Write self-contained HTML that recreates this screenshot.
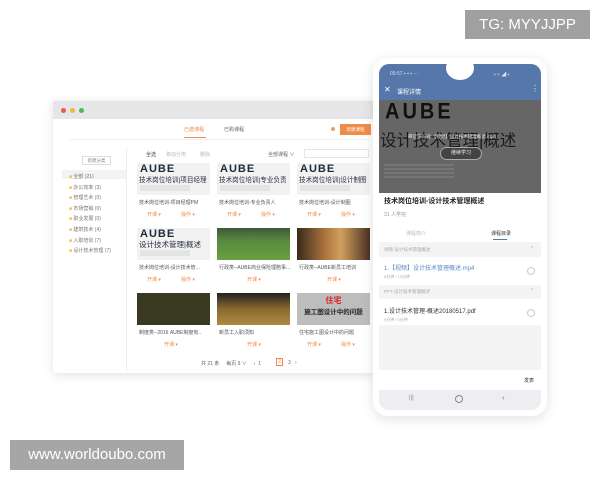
<!DOCTYPE html>
<html><head><meta charset="utf-8"><style>
*{margin:0;padding:0;box-sizing:border-box}
body{width:600px;height:480px;background:#fff;position:relative;overflow:hidden;font-family:"Liberation Sans","Noto Sans CJK SC",sans-serif;color:#555}
.a{position:absolute}
.t{font-size:5px;color:#888;white-space:nowrap}
.or{color:#f08c4a}
.img{position:absolute;width:73px;height:32px;background:#f2f2f2;overflow:hidden}
.aube{position:absolute;left:3px;top:0px;font:bold 11px "Liberation Sans",sans-serif;color:#1d2a3a;letter-spacing:1px}
.cn{position:absolute;left:2px;top:11px;font-size:6.6px;color:#2a3240;white-space:nowrap}
.ph{position:absolute;left:3px;top:22px;width:50px;height:6px;background:#e4e4e4}
</style></head><body>

<div class="a" style="left:53px;top:101px;width:322px;height:272px;background:#fff;box-shadow:0 2px 10px rgba(0,0,0,.12)"></div>
<div class="a" style="left:53px;top:101px;width:322px;height:18px;background:#e6e6e8"></div>
<div class="a" style="left:61px;top:108px;width:5px;height:5px;border-radius:50%;background:#e55"></div>
<div class="a" style="left:70px;top:108px;width:5px;height:5px;border-radius:50%;background:#eb3"></div>
<div class="a" style="left:79px;top:108px;width:5px;height:5px;border-radius:50%;background:#4b5"></div>
<div class="a t or" style="left:184px;top:126px">已建课程</div>
<div class="a t" style="left:224px;top:126px;color:#666">已购课程</div>
<div class="a" style="left:184px;top:137px;width:22px;height:1px;background:#f08c4a"></div>
<div class="a" style="left:70px;top:139px;width:300px;height:1px;background:#eee"></div>
<div class="a" style="left:331px;top:127px;width:4px;height:4px;border-radius:50%;background:#f0a060"></div>
<div class="a" style="left:340px;top:124px;width:31px;height:11px;background:#f08c4a;color:#fff;font-size:4.5px;text-align:center;line-height:11px">新建课程</div>

<div class="a" style="left:62px;top:148px;width:65px;height:224px;background:#fff;border-right:1px solid #eee"></div>
<div class="a t" style="left:82px;top:156px;width:29px;height:9px;border:1px solid #ddd;text-align:center;line-height:8px;font-size:4.5px">新建分类</div>
<div class="a" style="left:62px;top:170px;width:64px;height:9px;background:#f3f3f3"></div>
<div class="a" style="left:69px;top:172px;font-size:5px;color:#777;line-height:10.6px;white-space:nowrap">
<span style="color:#f0c040">■</span> 全部 (21)<br><span style="color:#f0c040">■</span> 办公效率 (3)<br><span style="color:#f0c040">■</span> 管理艺术 (0)<br><span style="color:#f0c040">■</span> 市场营销 (0)<br><span style="color:#f0c040">■</span> 职业发展 (0)<br><span style="color:#f0c040">■</span> 建筑技术 (4)<br><span style="color:#f0c040">■</span> 入职培训 (7)<br><span style="color:#f0c040">■</span> 设计技术管理 (7)</div>

<div class="a t" style="left:146px;top:151px;color:#444">全选</div>
<div class="a t" style="left:166px;top:151px;color:#bbb">移动分类</div>
<div class="a t" style="left:200px;top:151px;color:#bbb">删除</div>
<div class="a t" style="left:268px;top:151px;color:#666">全部课程 ∨</div>
<div class="a" style="left:304px;top:149px;width:65px;height:9px;border:1px solid #e6e6e6"></div>

<div class="img" style="left:137px;top:163px"><div class="aube">AUBE</div><div class="cn">技术岗位培训|项目经理</div><div class="ph"></div></div>
<div class="img" style="left:217px;top:163px"><div class="aube">AUBE</div><div class="cn">技术岗位培训|专业负责</div><div class="ph"></div></div>
<div class="img" style="left:297px;top:163px"><div class="aube">AUBE</div><div class="cn">技术岗位培训|设计制图</div><div class="ph"></div></div>
<div class="a t" style="left:139px;top:199px;color:#555">技术岗位培训-项目经理PM</div>
<div class="a t" style="left:219px;top:199px;color:#555">技术岗位培训-专业负责人</div>
<div class="a t" style="left:299px;top:199px;color:#555">技术岗位培训-设计制图</div>
<div class="a t or" style="left:147px;top:211px">开课 ▾</div><div class="a t or" style="left:181px;top:211px">操作 ▾</div>
<div class="a t or" style="left:227px;top:211px">开课 ▾</div><div class="a t or" style="left:261px;top:211px">操作 ▾</div>
<div class="a t or" style="left:307px;top:211px">开课 ▾</div><div class="a t or" style="left:341px;top:211px">操作 ▾</div>

<div class="img" style="left:137px;top:228px"><div class="aube">AUBE</div><div class="cn" style="font-size:7.5px">设计技术管理|概述</div><div class="ph"></div></div>
<div class="img" style="left:217px;top:228px;background:linear-gradient(#3d5a3a,#5a8a40 40%,#6aa040)"></div>
<div class="img" style="left:297px;top:228px;background:linear-gradient(90deg,#3a2a1a,#b07840 40%,#d0a060 60%,#4a3020)"></div>
<div class="a t" style="left:139px;top:264px;color:#555">技术岗位培训-设计技术管...</div>
<div class="a t" style="left:219px;top:264px;color:#555">行政类--AUBE商业保险理赔事...</div>
<div class="a t" style="left:299px;top:264px;color:#555">行政类--AUBE新员工培训</div>
<div class="a t or" style="left:147px;top:276px">开课 ▾</div><div class="a t or" style="left:181px;top:276px">操作 ▾</div>
<div class="a t or" style="left:247px;top:276px">开课 ▾</div>
<div class="a t or" style="left:327px;top:276px">开课 ▾</div>

<div class="img" style="left:137px;top:293px;background:#3a3a22"></div>
<div class="img" style="left:217px;top:293px;background:linear-gradient(#222,#8a6a30 50%,#b08a40)"></div>
<div class="img" style="left:297px;top:293px;background:#bdbdbd"><div style="position:absolute;left:0;width:73px;text-align:center;top:2px;color:#d22;font-size:8px;font-weight:bold">住宅</div><div style="position:absolute;left:0;width:73px;text-align:center;top:13px;color:#222;font-size:6.5px;font-weight:bold">施工图设计中的问题</div></div>
<div class="a t" style="left:139px;top:329px;color:#555">制度类--2016 AUBE制度有..</div>
<div class="a t" style="left:219px;top:329px;color:#555">新员工入职须知</div>
<div class="a t" style="left:299px;top:329px;color:#555">住宅施工图设计中的问题</div>
<div class="a t or" style="left:164px;top:341px">开课 ▾</div>
<div class="a t or" style="left:247px;top:341px">开课 ▾</div>
<div class="a t or" style="left:307px;top:341px">开课 ▾</div><div class="a t or" style="left:341px;top:341px">操作 ▾</div>

<div class="a t" style="left:201px;top:360px;color:#666">共 21 条 &nbsp; &nbsp; 每页 9 ∨ &nbsp; &nbsp; ‹ &nbsp;1</div>
<div class="a t" style="left:276px;top:358px;width:7px;height:8px;border:1px solid #f08c4a;color:#f08c4a;text-align:center;line-height:7px">2</div>
<div class="a t" style="left:288px;top:360px;color:#666">3 &nbsp; ›</div>

<div class="a" style="left:373px;top:58px;width:174px;height:358px;border-radius:14px;background:#fff;box-shadow:0 3px 12px rgba(0,0,0,.12)"></div>
<div class="a" style="left:379px;top:64px;width:162px;height:346px;border-radius:10px;overflow:hidden;background:#f4f4f4">
 <div class="a" style="left:0;top:0;width:162px;height:36px;background:#5577aa"></div>
 <div class="a" style="left:67px;top:-8px;width:28px;height:24px;border-radius:50%;background:#fff"></div>
 <div class="a" style="left:11px;top:7px;font-size:5px;color:#dde">09:57 ▪ ▪ ▪ ···</div>
 <div class="a" style="left:115px;top:7px;font-size:5px;color:#dde">▪ ≈ ◢ ▪</div>
 <div class="a" style="left:5px;top:21px;font-size:8px;color:#fff">✕</div>
 <div class="a" style="left:18px;top:23px;font-size:6px;color:#fff">课程详情</div>
 <div class="a" style="left:152px;top:20px;font-size:8px;color:#fff">⋮</div>
 <div class="a" style="left:0;top:36px;width:162px;height:93px;background:#666;overflow:hidden">
  <div class="a" style="left:6px;top:0px;font:bold 20px 'Liberation Sans',sans-serif;color:#111;letter-spacing:3px;transform:scaleY(1.1);transform-origin:top left">AUBE</div>
  <div class="a" style="left:1px;top:27px;font-size:16.5px;color:#1a1a1a;white-space:nowrap">设计技术管理|概述</div>
  <div class="a" style="left:29px;top:34px;font-size:4.5px;color:#eee;white-space:nowrap">最近学习到:【视频】设计技术管理概述.mp4</div>
  <div class="a" style="left:61px;top:47px;width:42px;height:13px;border-radius:7px;background:#444;border:1px solid #aaa;color:#eee;font-size:5px;text-align:center;line-height:11px">继续学习</div>
  <div class="a" style="left:5px;top:64px;width:70px;height:14px;background:repeating-linear-gradient(#767676 0 2px,#666 2px 4px)"></div>
 </div>
 <div class="a" style="left:0;top:129px;width:162px;height:47px;background:#fff"></div>
 <div class="a" style="left:5px;top:132px;font-size:7px;font-weight:bold;color:#222;white-space:nowrap">技术岗位培训-设计技术管理概述</div>
 <div class="a" style="left:5px;top:147px;font-size:5px;color:#999">31 人学完</div>
 <div class="a" style="left:0;top:160px;width:162px;height:18px;background:#fff"></div>
 <div class="a" style="left:27px;top:166px;font-size:5px;color:#bbb">课程简介</div>
 <div class="a" style="left:112px;top:166px;font-size:5px;color:#333">课程目录</div>
 <div class="a" style="left:114px;top:175px;width:14px;height:1px;background:#5577aa"></div>
 <div class="a" style="left:5px;top:183px;font-size:4.5px;color:#aaa">视频-设计技术管理概述</div>
 <div class="a" style="left:152px;top:182px;font-size:5px;color:#aaa">^</div>
 <div class="a" style="left:0;top:193px;width:162px;height:28px;background:#fff"></div>
 <div class="a" style="left:5px;top:199px;font-size:6px;color:#5a8ac8;white-space:nowrap">1.【视频】设计技术管理概述.mp4</div>
 <div class="a" style="left:5px;top:210px;font-size:4px;color:#aaa">0分钟 / 10分钟</div>
 <div class="a" style="left:148px;top:203px;width:8px;height:8px;border:1px solid #ccc;border-radius:50%"></div>
 <div class="a" style="left:5px;top:225px;font-size:4.5px;color:#aaa">PPT-设计技术管理概述</div>
 <div class="a" style="left:152px;top:224px;font-size:5px;color:#aaa">^</div>
 <div class="a" style="left:0;top:235px;width:162px;height:26px;background:#fff"></div>
 <div class="a" style="left:5px;top:242px;font-size:6px;color:#333;white-space:nowrap">1.设计技术管理-概述20180517.pdf</div>
 <div class="a" style="left:5px;top:253px;font-size:4px;color:#aaa">0分钟 / 0分钟</div>
 <div class="a" style="left:148px;top:245px;width:8px;height:8px;border:1px solid #ccc;border-radius:50%"></div>
 <div class="a" style="left:0;top:306px;width:162px;height:20px;background:#fff"></div>
 <div class="a" style="left:145px;top:313px;font-size:5px;color:#333">发表</div>
 <div class="a" style="left:0;top:326px;width:162px;height:20px;background:#eceef2"></div>
 <div class="a" style="left:30px;top:331px;font-size:6px;color:#888">|||</div>
 <div class="a" style="left:76px;top:331px;width:8px;height:8px;border:1px solid #888;border-radius:50%"></div>
 <div class="a" style="left:123px;top:329px;font-size:8px;color:#888">‹</div>
</div>

<div class="a" style="left:465px;top:10px;width:125px;height:29px;background:#a0a0a0;color:#fff;font-size:15px;text-align:center;line-height:29px">TG: MYYJJPP</div>
<div class="a" style="left:10px;top:440px;width:174px;height:30px;background:#a6a6a6;color:#fff;font-size:15px;text-align:center;line-height:30px">www.worldoubo.com</div>
</body></html>
